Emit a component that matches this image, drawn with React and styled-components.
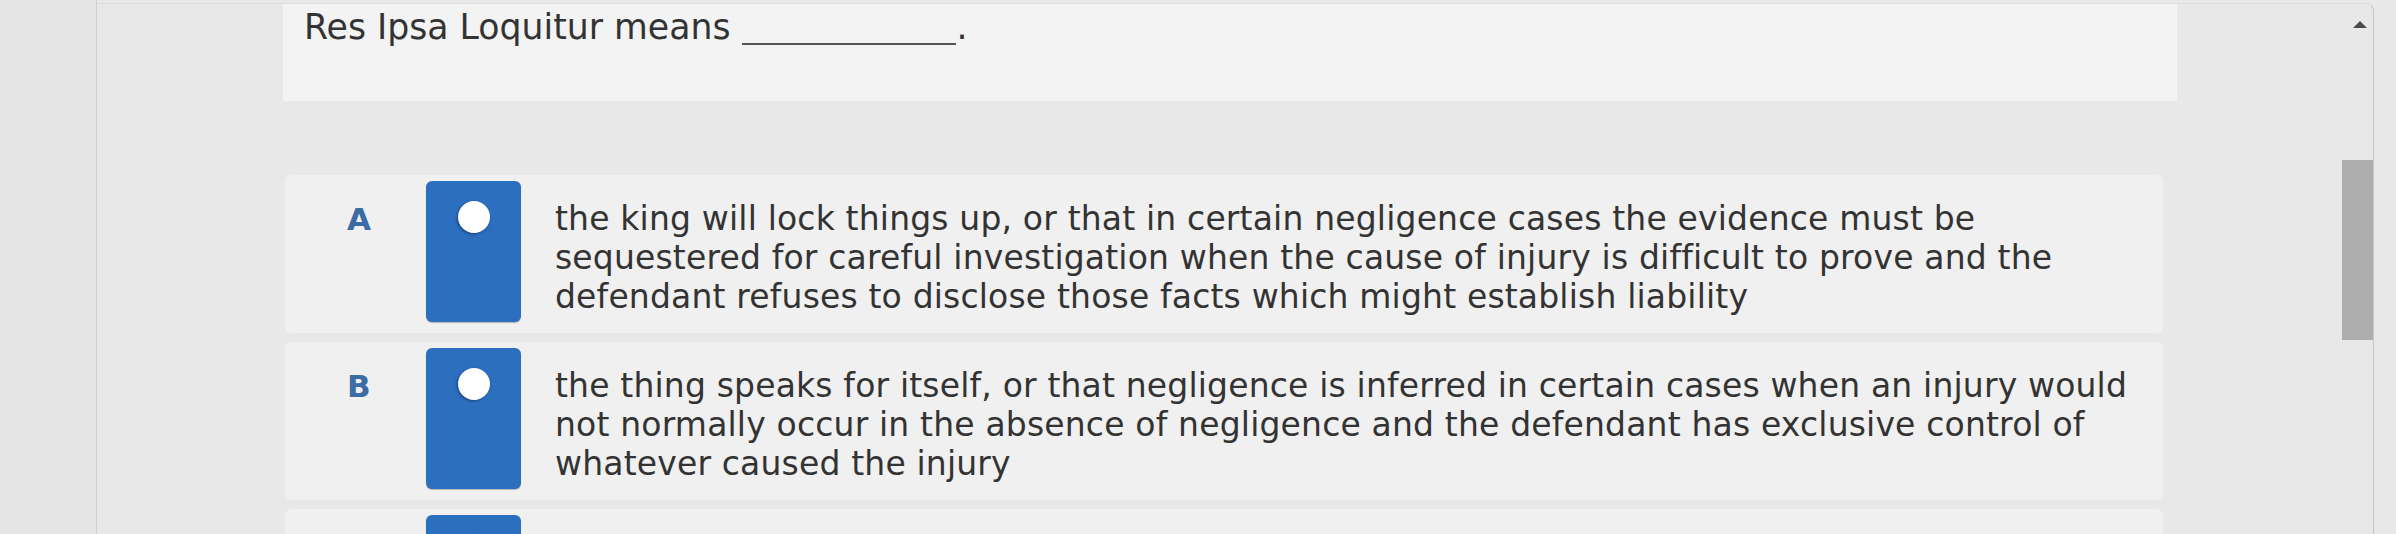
import React from "react";
import styled, {createGlobalStyle} from "styled-components";

const GlobalStyle = createGlobalStyle`
html, body {
  margin: 0;
  padding: 0;
  overflow: hidden;
  background: #e7e8e7;
}
body {
  font-family: "DejaVu Sans", Verdana, sans-serif;
}
`;

const Screen = styled.div`
display: flex;
width: 2396px;
height: 534px;
background: #e7e8e7;
overflow: hidden;
`;

const SideRail = styled.div`
width: 96px;
flex-shrink: 0;
background: #e4e5e4;
border-right: 1px solid #d0d1d0;
`;

const Frame = styled.div`
flex: 1;
display: flex;
margin: 3px 22px 0 0;
border-top: 1px solid #dcdddc;
border-right: 1px solid #c6c7c6;
border-top-right-radius: 8px;
overflow: hidden;
`;

const Sheet = styled.div`
width: 1894px;
margin-left: 186px;
flex-shrink: 0;
display: flex;
flex-direction: column;
overflow: hidden;
`;

const Prompt = styled.div`
flex-shrink: 0;
height: 97px;
box-sizing: border-box;
padding: 4px 0 0 21px;
background: #f2f3f2;
font-size: 34.7px;
line-height: 39px;
color: #333;
`;

const Blank = styled.span`
display: inline-block;
width: 214px;
margin: 0 0 0 12px;
border-bottom: 2px solid #555;
transform: translateY(6px);
vertical-align: baseline;
`;

const OptionList = styled.div`
flex-shrink: 0;
display: flex;
flex-direction: column;
gap: 9px;
padding-top: 74px;
`;

const Card = styled.div`
display: flex;
align-items: flex-start;
width: 1878px;
height: 158px;
margin-left: 2px;
box-sizing: border-box;
padding: 6px 0 0 62px;
background: #eff0ef;
border-radius: 6px;
flex-shrink: 0;
`;

const Letter = styled.div`
width: 79px;
margin-top: 19px;
font-size: 31px;
font-weight: bold;
line-height: 39px;
color: #3b6ca3;
`;

const Choice = styled.button`
display: flex;
justify-content: center;
align-items: flex-start;
width: 95px;
height: 141px;
padding: 20px 0 0;
border: none;
border-radius: 6px;
background: #2c6fbf;
box-shadow: 0 1px 1px rgba(0, 0, 0, 0.25);
flex-shrink: 0;
cursor: pointer;
`;

const Dot = styled.span`
width: 32px;
height: 32px;
border-radius: 50%;
background: ${p => (p.checked ? "#1d4f8c" : "#fff")};
box-shadow: -1px 1px 3px rgba(0, 10, 40, 0.45);
`;

const Answer = styled.div`
width: 1592px;
margin: 18px 0 0 34px;
font-size: 33px;
letter-spacing: 0.17px;
line-height: 39px;
color: #333;
`;

const Spacer = styled.div`
flex: 1;
`;

const Track = styled.div`
width: 34px;
flex-shrink: 0;
display: flex;
flex-direction: column;
align-items: center;
padding-top: 17px;
box-sizing: border-box;
`;

const UpArrow = styled.div`
width: 0;
height: 0;
margin-left: 8px;
border-left: 7px solid transparent;
border-right: 7px solid transparent;
border-bottom: 7px solid #4a4a4a;
`;

const Thumb = styled.div`
width: 31px;
height: 180px;
margin: 132px 0 0 2px;
background: #acadac;
`;

// the third choice sits below the fold, only its button top shows
const options = [
    {
        id: "a",
        label: "A",
        text: "the king will lock things up, or that in certain negligence cases the evidence must be sequestered for careful investigation when the cause of injury is difficult to prove and the defendant refuses to disclose those facts which might establish liability"
    },
    {
        id: "b",
        label: "B",
        text: "the thing speaks for itself, or that negligence is inferred in certain cases when an injury would not normally occur in the absence of negligence and the defendant has exclusive control of whatever caused the injury"
    },
    {
        id: "c",
        label: "",
        text: ""
    }
];

export default function App() {
    const [picked, setPicked] = React.useState(null);

    return (
        <Screen>
            <GlobalStyle/>
            <SideRail/>
            <Frame>
                <Sheet>
                    <Prompt>
                        Res Ipsa Loquitur means<Blank/>.
                    </Prompt>
                    <OptionList>
                        {options.map(opt => (
                            <Card key={opt.id}>
                                <Letter>{opt.label}</Letter>
                                <Choice onClick={() => setPicked(opt.id)}>
                                    <Dot checked={picked === opt.id}/>
                                </Choice>
                                <Answer>{opt.text}</Answer>
                            </Card>
                        ))}
                    </OptionList>
                </Sheet>
                <Spacer/>
                <Track>
                    <UpArrow/>
                    <Thumb/>
                </Track>
            </Frame>
        </Screen>
    );
}
